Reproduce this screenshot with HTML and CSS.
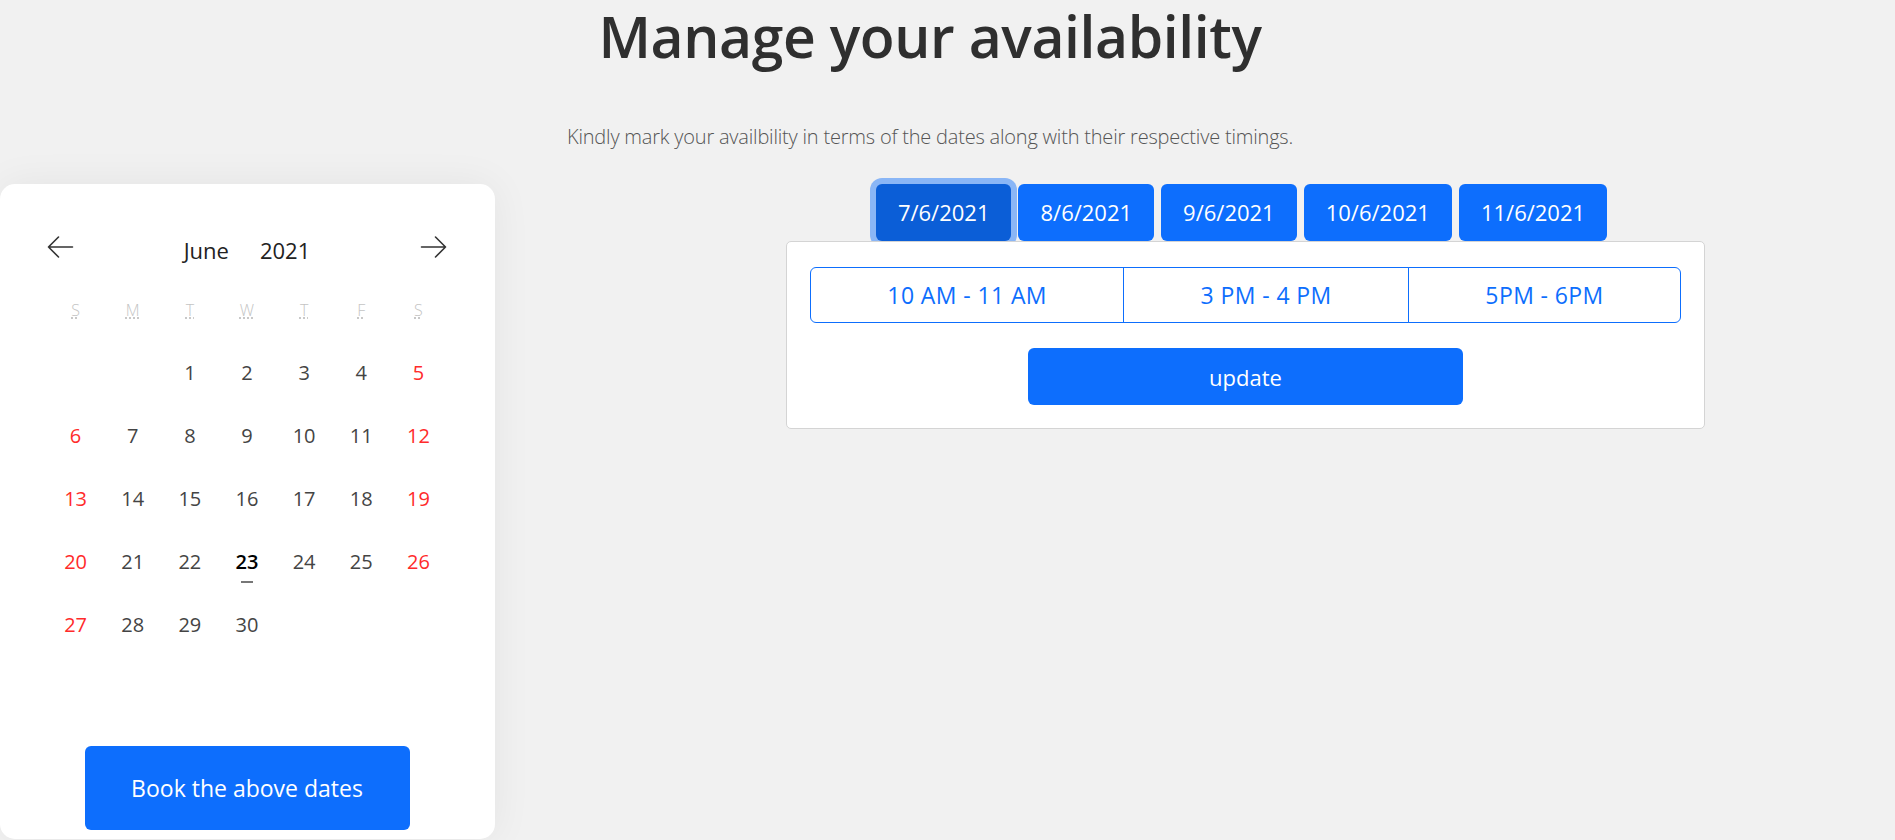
FILE: index.html
```html
<!DOCTYPE html>
<html lang="en">
<head>
<meta charset="utf-8">
<title>Manage your availability</title>
<link rel="stylesheet" href="styles.css">
</head>
<body>
  <header class="intro">
    <h1 class="title">Manage your availability</h1>
    <p class="lead">Kindly mark your availbility in terms of the dates along with their respective timings.</p>
  </header>

  <main class="layout">
    <section class="calendar">
      <div class="cal-head">
        <button class="nav-btn" aria-label="Previous month">
          <svg width="27" height="24" viewBox="0 0 27 24" fill="none" stroke="#333" stroke-width="1.6" stroke-linecap="round" stroke-linejoin="round"><path d="M1.5 12H25.5M11.5 2L1.5 12L11.5 22"/></svg>
        </button>
        <div class="cal-title"><span>June</span><span>2021</span></div>
        <button class="nav-btn" aria-label="Next month">
          <svg width="27" height="24" viewBox="0 0 27 24" fill="none" stroke="#333" stroke-width="1.6" stroke-linecap="round" stroke-linejoin="round"><path d="M25.5 12H1.5M15.5 2L25.5 12L15.5 22"/></svg>
        </button>
      </div>
      <div class="cal-grid">
        <div class="wd"><abbr title="Sunday">S</abbr></div>
        <div class="wd"><abbr title="Monday">M</abbr></div>
        <div class="wd"><abbr title="Tuesday">T</abbr></div>
        <div class="wd"><abbr title="Wednesday">W</abbr></div>
        <div class="wd"><abbr title="Thursday">T</abbr></div>
        <div class="wd"><abbr title="Friday">F</abbr></div>
        <div class="wd"><abbr title="Saturday">S</abbr></div>

        <div class="day"></div>
        <div class="day"></div>
        <div class="day">1</div>
        <div class="day">2</div>
        <div class="day">3</div>
        <div class="day">4</div>
        <div class="day weekend">5</div>

        <div class="day weekend">6</div>
        <div class="day">7</div>
        <div class="day">8</div>
        <div class="day">9</div>
        <div class="day">10</div>
        <div class="day">11</div>
        <div class="day weekend">12</div>

        <div class="day weekend">13</div>
        <div class="day">14</div>
        <div class="day">15</div>
        <div class="day">16</div>
        <div class="day">17</div>
        <div class="day">18</div>
        <div class="day weekend">19</div>

        <div class="day weekend">20</div>
        <div class="day">21</div>
        <div class="day">22</div>
        <div class="day today"><span>23</span></div>
        <div class="day">24</div>
        <div class="day">25</div>
        <div class="day weekend">26</div>

        <div class="day weekend">27</div>
        <div class="day">28</div>
        <div class="day">29</div>
        <div class="day">30</div>
        <div class="day"></div>
        <div class="day"></div>
        <div class="day"></div>
      </div>
      <button class="book-btn">Book the above dates</button>
    </section>

    <section class="slots">
      <div class="tabs">
        <button class="tab active">7/6/2021</button>
        <button class="tab">8/6/2021</button>
        <button class="tab">9/6/2021</button>
        <button class="tab">10/6/2021</button>
        <button class="tab">11/6/2021</button>
      </div>
      <div class="slot-card">
        <div class="slot-group">
          <button class="slot">10 AM - 11 AM</button>
          <button class="slot">3 PM - 4 PM</button>
          <button class="slot">5PM - 6PM</button>
        </div>
        <button class="update-btn">update</button>
      </div>
    </section>
  </main>
</body>
</html>
```

FILE: styles.css
```css
* { box-sizing: border-box; }

html, body {
  margin: 0;
  height: 100%;
  overflow: hidden;
}

body {
  background: #f1f1f1;
  font-family: "Open Sans", "Noto Sans", "Liberation Sans", sans-serif;
  color: #333;
}

button {
  font-family: inherit;
  cursor: pointer;
}

.intro {
  padding-right: 35px;
  padding-top: 2px;
  text-align: center;
}

.title {
  margin: 0;
  font-size: 57px;
  line-height: 1.2;
  font-weight: 600;
  color: #2f2f2f;
  letter-spacing: -0.4px;
}

.lead {
  margin: 52px 0 0;
  font-size: 20px;
  line-height: 30px;
  font-weight: 300;
  color: #555;
  letter-spacing: -0.2px;
}

.layout {
  display: flex;
  align-items: flex-start;
  margin-top: 32px;
}

/* Calendar */
.calendar {
  width: 495px;
  height: 655px;
  flex: none;
  background: #fff;
  border-radius: 15px;
  box-shadow: 0 0 40px rgba(0, 0, 0, 0.06);
  padding: 32px 48px 8px 47px;
  display: flex;
  flex-direction: column;
}

.cal-head {
  height: 62px;
  display: flex;
  align-items: center;
  justify-content: space-between;
}

.nav-btn {
  border: 0;
  background: none;
  padding: 0;
  width: 27px;
  height: 24px;
  display: flex;
}

.cal-title {
  display: flex;
  gap: 31px;
  font-size: 22px;
  color: #222;
  padding-top: 5px;
}

.cal-grid {
  display: grid;
  grid-template-columns: repeat(7, 1fr);
  grid-auto-rows: 63px;
}

.wd {
  display: flex;
  align-items: center;
  justify-content: center;
  font-size: 16px;
  font-weight: 300;
  color: #c4c4c4;
}

.wd abbr {
  text-decoration: underline dotted;
  text-decoration-color: #bbb;
  text-underline-offset: 2px;
}

.day {
  display: flex;
  align-items: center;
  justify-content: center;
  font-size: 20px;
  color: #444;
}

.day.weekend { color: #ff2b2b; }

.day.today span {
  position: relative;
  color: #000;
  font-weight: 600;
}

.day.today span::after {
  content: "";
  position: absolute;
  left: 50%;
  top: 33px;
  width: 12px;
  height: 1.5px;
  margin-left: -6px;
  background: #777;
}

.book-btn {
  margin: 90px auto 0;
  width: 325px;
  height: 84px;
  border: 0;
  border-radius: 6px;
  background: #0d6efd;
  color: #fff;
  font-size: 23px;
}

/* Slots */
.slots {
  margin-left: 291px;
  width: 919px;
  flex: none;
}

.tabs {
  display: flex;
  justify-content: center;
  gap: 7px;
  padding-right: 8px;
}

.tab {
  border: 0;
  border-radius: 6px;
  background: #0d6efd;
  color: #fff;
  font-size: 22px;
  line-height: 33px;
  padding: 12px 22px;
}

.tab.active {
  background: #0b5ed7;
  box-shadow: 0 0 0 6px rgba(13, 110, 253, 0.45);
}

.slot-card {
  position: relative;
  background: #fff;
  border: 1px solid #d4d4d4;
  border-radius: 5px;
  padding: 25px 23px 23px;
  display: flex;
  flex-direction: column;
}

.slot-group {
  display: flex;
}

.slot {
  flex: 1 1 auto;
  background: #fff;
  border: 1px solid #0d6efd;
  color: #0d6efd;
  font-size: 23px;
  letter-spacing: 0.4px;
  line-height: 33px;
  padding: 10.5px 20px;
  border-radius: 0;
}

.slot + .slot { margin-left: -1px; }
.slot:first-child { border-radius: 6px 0 0 6px; }
.slot:last-child { border-radius: 0 6px 6px 0; }

.update-btn {
  margin: 25px auto 0;
  width: 50%;
  height: 57px;
  border: 0;
  border-radius: 6px;
  background: #0d6efd;
  color: #fff;
  font-size: 22px;
}
```
